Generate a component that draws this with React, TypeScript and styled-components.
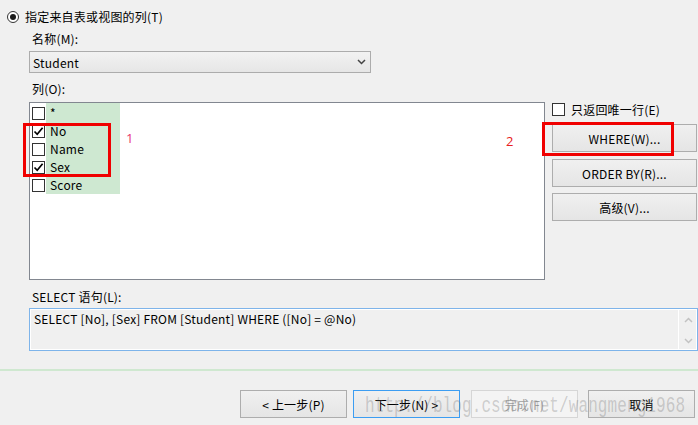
import React from 'react';
import styled, { createGlobalStyle } from 'styled-components';

const Global = createGlobalStyle`
  html, body { margin: 0; padding: 0; background: #f0f0f0; }
  body {
    font-family: "Noto Sans CJK SC", "Noto Sans", sans-serif;
    font-size: 12px;
    letter-spacing: 0.2px;
    color: #000;
  }
`;

const Page = styled.div`
  position: relative;
  width: 698px;
  height: 425px;
  overflow: hidden;
  background: #f0f0f0;
  padding-top: 10px;
  box-sizing: border-box;
`;

const RadioRow = styled.div`
  display: flex;
  align-items: center;
  height: 14px;
  padding-left: 7px;
  gap: 6px;
  line-height: 14px;
`;

const RadioOuter = styled.span`
  width: 10px;
  height: 10px;
  border: 1px solid #333;
  border-radius: 50%;
  display: flex;
  align-items: center;
  justify-content: center;
  background: #fff;
`;

const RadioDot = styled.span`
  width: 6px;
  height: 6px;
  border-radius: 50%;
  background: #1a1a1a;
`;

const Section = styled.div`
  margin-left: 29px;
`;

const Label = styled.div<{ $mt: number }>`
  margin-top: ${p => p.$mt}px;
  padding-left: 3px;
  height: 16px;
  line-height: 16px;
`;

const Select = styled.div`
  margin-top: 4px;
  width: 342px;
  height: 22px;
  box-sizing: border-box;
  border: 1px solid #acacac;
  background: linear-gradient(#f2f2f2, #e6e6e6);
  display: flex;
  align-items: center;
  justify-content: space-between;
  padding: 0 4px 0 3px;
`;

const ColumnsRow = styled.div`
  margin-top: 5px;
  display: flex;
  align-items: flex-start;
`;

const ListBox = styled.div`
  position: relative;
  width: 516px;
  height: 178px;
  box-sizing: border-box;
  border: 1px solid #828790;
  background: #fff;
  padding: 1px 0 0 2px;
`;

const Highlight = styled.div`
  position: absolute;
  left: 16px;
  top: 0;
  width: 74px;
  height: 91px;
  background: #cee8d1;
`;

const Item = styled.div`
  position: relative;
  display: flex;
  align-items: center;
  height: 18px;
  gap: 5px;
  line-height: 18px;
`;

const Box = styled.span`
  width: 13px;
  height: 13px;
  box-sizing: border-box;
  border: 1px solid #333;
  background: #fff;
  display: flex;
  align-items: center;
  justify-content: center;
  flex: none;
`;

const Annot = styled.span<{ $color: string }>`
  position: absolute;
  font-family: "Open Sans", "Noto Sans", sans-serif;
  font-size: 13px;
  color: ${p => p.$color};
`;

const RedFrame = styled.div`
  position: absolute;
  border: 3px solid #f00000;
  box-sizing: border-box;
`;

const RightCol = styled.div`
  margin-left: 7px;
  width: 145px;
  padding-top: 1px;
  display: flex;
  flex-direction: column;
`;

const CheckRow = styled.div`
  display: flex;
  align-items: center;
  height: 13px;
  gap: 6px;
  line-height: 13px;
`;

const Btn = styled.div<{ $mt: number }>`
  margin-top: ${p => p.$mt}px;
  height: 28px;
  width: 145px;
  box-sizing: border-box;
  border: 1px solid #adadad;
  background: linear-gradient(#f0f0f0, #e5e5e5);
  display: flex;
  align-items: center;
  justify-content: center;
`;

const TextArea = styled.div`
  margin-top: 3px;
  width: 669px;
  height: 43px;
  box-sizing: border-box;
  border: 1px solid #7eb4ea;
  box-shadow: inset 0 0 0 1px #fff;
  display: flex;
  background: #f0f0f0;
`;

const TextBody = styled.div`
  flex: 1;
  padding: 2px 4px;
  line-height: 16px;
`;

const ScrollBar = styled.div`
  width: 18px;
  border-left: 1px solid #fff;
  display: flex;
  flex-direction: column;
  align-items: center;
  justify-content: space-between;
  padding: 8px 0 6px;
`;

const Divider = styled.div`
  margin-top: 18px;
  height: 2px;
  background: #cfe8d0;
`;

const Footer = styled.div`
  margin-top: 19px;
  display: flex;
  justify-content: flex-end;
  padding-right: 3px;
`;

const FBtn = styled.div<{ $ml: number; $variant?: 'default' | 'focus' | 'disabled' }>`
  margin-left: ${p => p.$ml}px;
  width: 107px;
  height: 28px;
  box-sizing: border-box;
  border: 1px solid ${p => (p.$variant === 'focus' ? '#3c9df2' : p.$variant === 'disabled' ? '#d6d6d6' : '#adadad')};
  background: ${p => (p.$variant === 'disabled' ? '#f4f4f4' : 'linear-gradient(#f0f0f0, #e5e5e5)')};
  color: ${p => (p.$variant === 'disabled' ? '#a0a0a0' : '#000')};
  display: flex;
  align-items: center;
  justify-content: center;
`;

const Watermark = styled.div`
  position: absolute;
  left: 365px;
  top: 394px;
  font-family: "Liberation Mono", monospace;
  font-size: 16px;
  letter-spacing: 0.1px;
  color: rgba(110, 110, 110, 0.3);
  transform: scaleY(1.35);
  transform-origin: left top;
  white-space: nowrap;
  pointer-events: none;
`;

const Check = () => (
  <svg width="11" height="11" viewBox="0 0 11 11">
    <path d="M1.5 5.5 L4.2 8.3 L9.6 1.8" fill="none" stroke="#000" strokeWidth="1.7" />
  </svg>
);

const Chevron = ({ up, color }: { up?: boolean; color: string }) => (
  <svg width="9" height="6" viewBox="0 0 9 6">
    <path d={up ? 'M1 5 L4.5 1.5 L8 5' : 'M1 1 L4.5 4.5 L8 1'} fill="none" stroke={color} strokeWidth="1.5" />
  </svg>
);

const items = [
  { name: '*', checked: false },
  { name: 'No', checked: true },
  { name: 'Name', checked: false },
  { name: 'Sex', checked: true },
  { name: 'Score', checked: false },
];

export default function App() {
  return (
    <Page>
      <Global />
      <RadioRow>
        <RadioOuter><RadioDot /></RadioOuter>
        <span>指定来自表或视图的列(T)</span>
      </RadioRow>
      <Section>
        <Label $mt={7}>名称(M):</Label>
        <Select>
          <span>Student</span>
          <Chevron color="#444" />
        </Select>
        <Label $mt={8}>列(O):</Label>
        <ColumnsRow>
          <ListBox>
            <Highlight />
            {items.map(it => (
              <Item key={it.name}>
                <Box>{it.checked && <Check />}</Box>
                <span>{it.name}</span>
              </Item>
            ))}
            <Annot $color="#e8336f" style={{ left: 96, top: 26 }}>1</Annot>
            <Annot $color="#e82020" style={{ left: 476, top: 29 }}>2</Annot>
          </ListBox>
          <RightCol>
            <CheckRow>
              <Box />
              <span>只返回唯一行(E)</span>
            </CheckRow>
            <Btn $mt={8}>WHERE(W)...</Btn>
            <Btn $mt={7}>ORDER BY(R)...</Btn>
            <Btn $mt={6}>高级(V)...</Btn>
          </RightCol>
        </ColumnsRow>
        <Label $mt={9}>SELECT 语句(L):</Label>
        <TextArea>
          <TextBody>SELECT [No], [Sex] FROM [Student] WHERE ([No] = @No)</TextBody>
          <ScrollBar>
            <Chevron up color="#c2c2c2" />
            <Chevron color="#c2c2c2" />
          </ScrollBar>
        </TextArea>
      </Section>
      <Divider />
      <Footer>
        <FBtn $ml={0}>&lt; 上一步(P)</FBtn>
        <FBtn $ml={6} $variant="focus">下一步(N) &gt;</FBtn>
        <FBtn $ml={11} $variant="disabled">完成(F)</FBtn>
        <FBtn $ml={10}>取消</FBtn>
      </Footer>
      <RedFrame style={{ left: 23, top: 123, width: 88, height: 54 }} />
      <RedFrame style={{ left: 542, top: 122, width: 132, height: 34 }} />
      <Watermark>http://blog.csdn.net/wangmeng1968</Watermark>
    </Page>
  );
}
